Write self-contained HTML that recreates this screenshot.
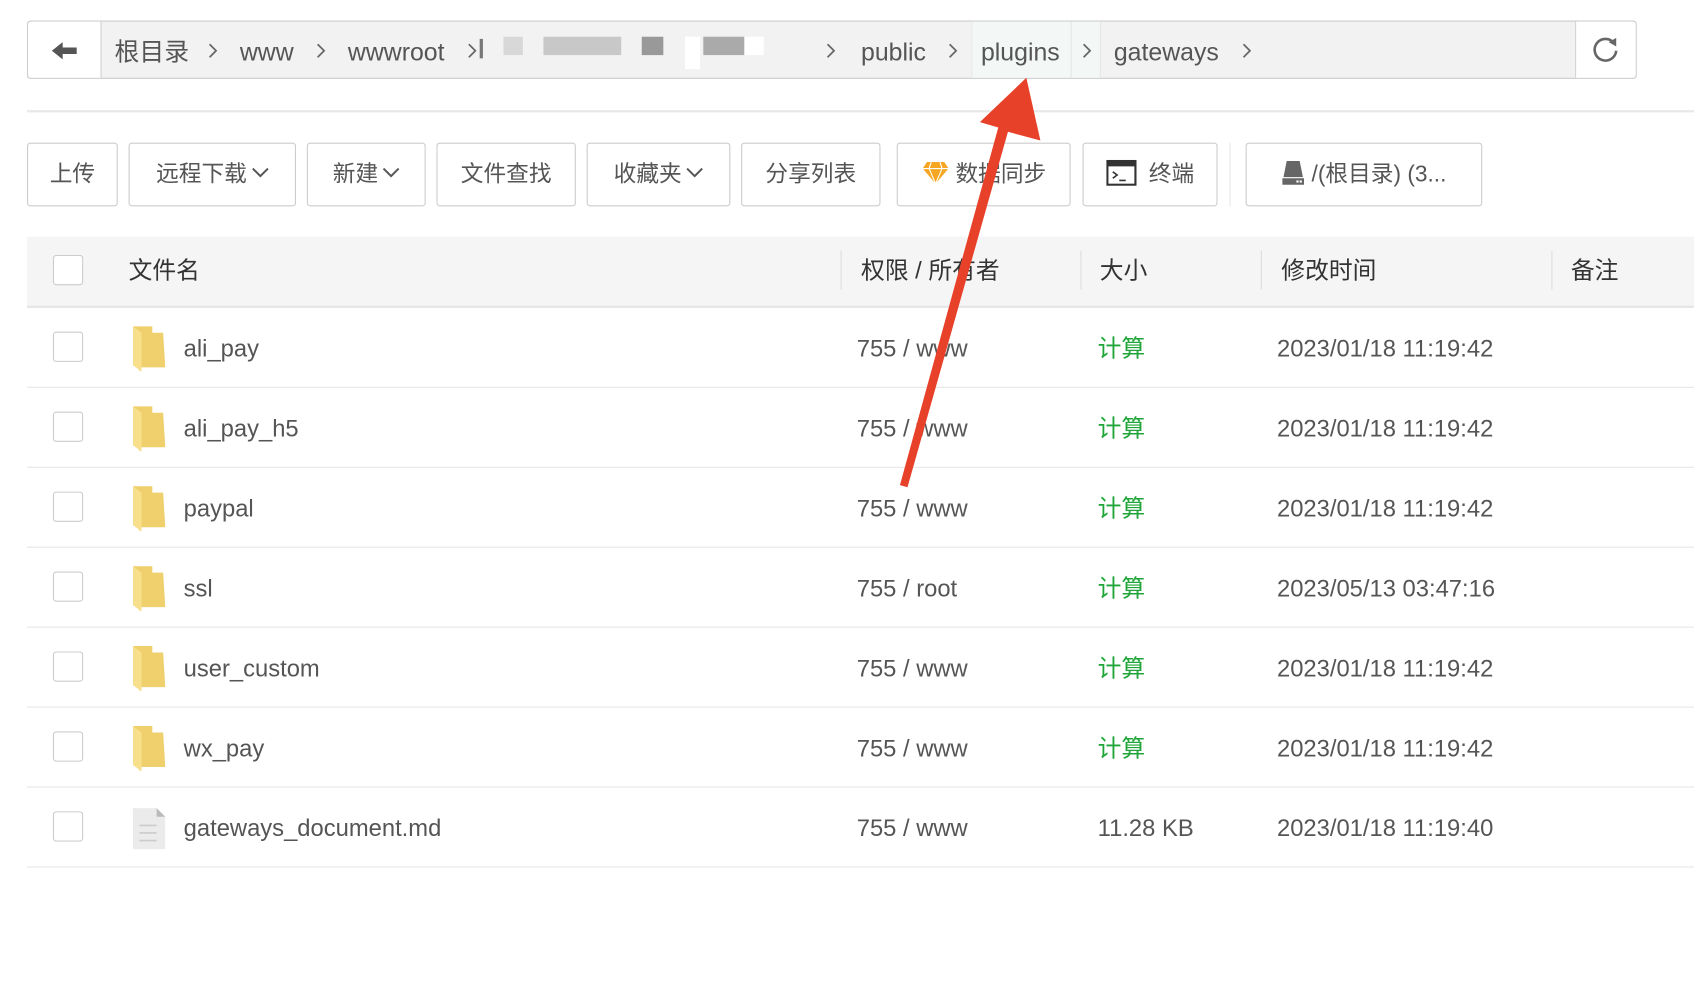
<!DOCTYPE html>
<html><head><meta charset="utf-8"><style>
html,body{margin:0;padding:0;background:#fff;width:1694px;height:982px;overflow:hidden}
#w{position:absolute;left:0;top:0;width:1568px;height:909px;transform:scale(1.08036);transform-origin:0 0;font-family:"Liberation Sans","Noto Sans CJK SC",sans-serif;color:#555}
.a{position:absolute;white-space:nowrap}
.bc{position:absolute;left:25px;top:19px;width:1488px;height:52px;border:1px solid #ccc;border-radius:3px;background:#f2f2f2}
.t{position:absolute;top:2px;line-height:52px;font-size:23px;color:#555}
.ch{position:absolute;top:19px}
.btn{position:absolute;top:132px;height:57px;border:1px solid #ccc;border-radius:3px;background:#fff;font-size:21px;line-height:57px;text-align:center;color:#555}
.cb{position:absolute;left:49px;width:26px;height:26px;border:1px solid #ccc;border-radius:3px;background:#fff}
.row{position:absolute;left:25px;width:1543px;height:73px;border-bottom:1px solid #e6e6e6;font-size:22px;color:#555}
.row .a{top:1px;line-height:73px}
.fold{position:absolute;left:98px;top:17px;width:30px;height:42px}
.dd{vertical-align:3px;margin-left:4px}
</style></head><body><div id="w">
<div class="bc">
 <div style="position:absolute;left:0;top:0;width:67px;height:52px;background:#fff;border-right:1px solid #ccc;border-radius:3px 0 0 3px"></div>
 <svg style="position:absolute;left:22px;top:18px" width="24" height="18" viewBox="0 0 24 18"><path d="M0 9 L10 1 L10 6 L23 6 L23 12 L10 12 L10 17 Z" fill="#555"/></svg>
 <span class="t" style="left:80px">根目录</span><svg class="ch" style="left:166px" width="10" height="16"><polyline points="2,2 8,8 2,14" fill="none" stroke="#666" stroke-width="1.6"/></svg>
 <span class="t" style="left:196px">www</span><svg class="ch" style="left:266px" width="10" height="16"><polyline points="2,2 8,8 2,14" fill="none" stroke="#666" stroke-width="1.6"/></svg>
 <span class="t" style="left:296px">wwwroot</span><svg class="ch" style="left:406px" width="10" height="16"><polyline points="2,2 8,8 2,14" fill="none" stroke="#666" stroke-width="1.6"/></svg>
 <div style="position:absolute;left:418px;top:16px;width:3px;height:18px;background:#777"></div>
 <div style="position:absolute;left:440px;top:14px;width:18px;height:17px;background:#d8d8d8"></div>
 <div style="position:absolute;left:477px;top:14px;width:72px;height:17px;background:#c8c8c8"></div>
 <div style="position:absolute;left:568px;top:14px;width:20px;height:17px;background:#999"></div>
 <div style="position:absolute;left:608px;top:14px;width:14px;height:30px;background:#fff"></div>
 <div style="position:absolute;left:625px;top:14px;width:38px;height:17px;background:#aaa"></div>
 <div style="position:absolute;left:663px;top:14px;width:18px;height:17px;background:#fff"></div>
 <svg class="ch" style="left:738px" width="10" height="16"><polyline points="2,2 8,8 2,14" fill="none" stroke="#666" stroke-width="1.6"/></svg>
 <span class="t" style="left:771px">public</span><svg class="ch" style="left:851px" width="10" height="16"><polyline points="2,2 8,8 2,14" fill="none" stroke="#666" stroke-width="1.6"/></svg>
 <div style="position:absolute;left:873px;top:0;width:118px;height:52px;background:#f3f8f6;border-left:1px solid #e3e8e6"></div>
 <div style="position:absolute;left:965px;top:0;width:1px;height:52px;background:#e3e8e6"></div>
 <div style="position:absolute;left:992px;top:0;width:1px;height:52px;background:#e3e8e6"></div>
 <span class="t" style="left:882px">plugins</span><svg class="ch" style="left:975px" width="10" height="16"><polyline points="2,2 8,8 2,14" fill="none" stroke="#666" stroke-width="1.6"/></svg>
 <span class="t" style="left:1005px">gateways</span><svg class="ch" style="left:1123px" width="10" height="16"><polyline points="2,2 8,8 2,14" fill="none" stroke="#666" stroke-width="1.6"/></svg>
 <div style="position:absolute;right:0;top:0;width:55px;height:52px;background:#fff;border-left:1px solid #ccc;border-radius:0 3px 3px 0"></div>
 <svg style="position:absolute;left:1446px;top:12px" width="28" height="28" viewBox="0 0 28 28"><path d="M22 8 A10 10 0 1 0 24 15" fill="none" stroke="#666" stroke-width="2.4"/><path d="M17 7 L24 3 L24 11 Z" fill="#666"/></svg>
</div>
<div class="a" style="left:25px;top:102px;width:1543px;height:2px;background:#e8e8e8"></div>
<div class="btn" style="left:25px;width:82px">上传</div>
<div class="btn" style="left:119px;width:153px">远程下载<svg class="dd" width="16" height="10"><polyline points="1,1 8,8 15,1" fill="none" stroke="#555" stroke-width="1.8"/></svg></div>
<div class="btn" style="left:284px;width:108px">新建<svg class="dd" width="16" height="10"><polyline points="1,1 8,8 15,1" fill="none" stroke="#555" stroke-width="1.8"/></svg></div>
<div class="btn" style="left:404px;width:127px">文件查找</div>
<div class="btn" style="left:543px;width:131px">收藏夹<svg class="dd" width="16" height="10"><polyline points="1,1 8,8 15,1" fill="none" stroke="#555" stroke-width="1.8"/></svg></div>
<div class="btn" style="left:686px;width:127px">分享列表</div>
<div class="btn" style="left:830px;width:159px"><svg style="vertical-align:-3px" width="26" height="22" viewBox="0 0 26 22"><path d="M5 1 L21 1 L25 7 L13 21 L1 7 Z" fill="#f5a623"/><path d="M1 7 L25 7 M9 1 L7 7 L13 21 L19 7 L17 1" fill="none" stroke="#fff" stroke-width="1"/></svg> 数据同步</div>
<div class="btn" style="left:1002px;width:123px"><svg style="vertical-align:-4px" width="28" height="24" viewBox="0 0 28 24"><rect x="1" y="1" width="26" height="22" fill="#fff" stroke="#333" stroke-width="2"/><rect x="1" y="1" width="26" height="5" fill="#333"/><path d="M6 11 L10 14 L6 17 M12 19 L18 19" fill="none" stroke="#333" stroke-width="1.5"/></svg>&nbsp; 终端</div>
<div class="a" style="left:1138px;top:132px;width:1px;height:59px;background:#e6e6e6"></div>
<div class="btn" style="left:1153px;width:217px"><svg style="vertical-align:-4px" width="22" height="24" viewBox="0 0 22 24"><path d="M5 1 L17 1 L20 16 L2 16 Z" fill="#666"/><rect x="1" y="17" width="20" height="6" fill="#666"/><rect x="14" y="19" width="2" height="2" fill="#fff"/><rect x="17" y="19" width="2" height="2" fill="#fff"/></svg> /(根目录) (3...</div>
<div class="a" style="left:25px;top:219px;width:1543px;height:64px;background:#f5f5f5;border-bottom:2px solid #e6e6e6"></div>
<div class="cb" style="top:236px"></div>
<div class="a" style="left:119px;top:219px;line-height:64px;font-size:22px;color:#333">文件名</div>
<div class="a" style="left:778px;top:232px;width:1px;height:36px;background:#ddd"></div>
<div class="a" style="left:797px;top:219px;line-height:64px;font-size:22px;color:#333">权限 / 所有者</div>
<div class="a" style="left:1000px;top:232px;width:1px;height:36px;background:#ddd"></div>
<div class="a" style="left:1018px;top:219px;line-height:64px;font-size:22px;color:#333">大小</div>
<div class="a" style="left:1167px;top:232px;width:1px;height:36px;background:#ddd"></div>
<div class="a" style="left:1186px;top:219px;line-height:64px;font-size:22px;color:#333">修改时间</div>
<div class="a" style="left:1436px;top:232px;width:1px;height:36px;background:#ddd"></div>
<div class="a" style="left:1454px;top:219px;line-height:64px;font-size:22px;color:#333">备注</div>

<div class="row" style="top:285px"><div class="cb" style="left:24px;top:22px"></div><svg class="fold" viewBox="0 0 30 42"><path d="M0 0 L18 0 L18 6 L28 6 L30 38 L8 38 L6 42 Z" fill="#f0cf6d"/><path d="M0 0 L8 6 L8 42 L0 36 Z" fill="#f7df8c"/></svg><span class="a" style="left:145px">ali_pay</span><span class="a" style="left:768px">755 / www</span><span class="a" style="left:991px;color:#20a53a">计算</span><span class="a" style="left:1157px">2023/01/18 11:19:42</span></div>
<div class="row" style="top:359px"><div class="cb" style="left:24px;top:22px"></div><svg class="fold" viewBox="0 0 30 42"><path d="M0 0 L18 0 L18 6 L28 6 L30 38 L8 38 L6 42 Z" fill="#f0cf6d"/><path d="M0 0 L8 6 L8 42 L0 36 Z" fill="#f7df8c"/></svg><span class="a" style="left:145px">ali_pay_h5</span><span class="a" style="left:768px">755 / www</span><span class="a" style="left:991px;color:#20a53a">计算</span><span class="a" style="left:1157px">2023/01/18 11:19:42</span></div>
<div class="row" style="top:433px"><div class="cb" style="left:24px;top:22px"></div><svg class="fold" viewBox="0 0 30 42"><path d="M0 0 L18 0 L18 6 L28 6 L30 38 L8 38 L6 42 Z" fill="#f0cf6d"/><path d="M0 0 L8 6 L8 42 L0 36 Z" fill="#f7df8c"/></svg><span class="a" style="left:145px">paypal</span><span class="a" style="left:768px">755 / www</span><span class="a" style="left:991px;color:#20a53a">计算</span><span class="a" style="left:1157px">2023/01/18 11:19:42</span></div>
<div class="row" style="top:507px"><div class="cb" style="left:24px;top:22px"></div><svg class="fold" viewBox="0 0 30 42"><path d="M0 0 L18 0 L18 6 L28 6 L30 38 L8 38 L6 42 Z" fill="#f0cf6d"/><path d="M0 0 L8 6 L8 42 L0 36 Z" fill="#f7df8c"/></svg><span class="a" style="left:145px">ssl</span><span class="a" style="left:768px">755 / root</span><span class="a" style="left:991px;color:#20a53a">计算</span><span class="a" style="left:1157px">2023/05/13 03:47:16</span></div>
<div class="row" style="top:581px"><div class="cb" style="left:24px;top:22px"></div><svg class="fold" viewBox="0 0 30 42"><path d="M0 0 L18 0 L18 6 L28 6 L30 38 L8 38 L6 42 Z" fill="#f0cf6d"/><path d="M0 0 L8 6 L8 42 L0 36 Z" fill="#f7df8c"/></svg><span class="a" style="left:145px">user_custom</span><span class="a" style="left:768px">755 / www</span><span class="a" style="left:991px;color:#20a53a">计算</span><span class="a" style="left:1157px">2023/01/18 11:19:42</span></div>
<div class="row" style="top:655px"><div class="cb" style="left:24px;top:22px"></div><svg class="fold" viewBox="0 0 30 42"><path d="M0 0 L18 0 L18 6 L28 6 L30 38 L8 38 L6 42 Z" fill="#f0cf6d"/><path d="M0 0 L8 6 L8 42 L0 36 Z" fill="#f7df8c"/></svg><span class="a" style="left:145px">wx_pay</span><span class="a" style="left:768px">755 / www</span><span class="a" style="left:991px;color:#20a53a">计算</span><span class="a" style="left:1157px">2023/01/18 11:19:42</span></div>
<div class="row" style="top:729px"><div class="cb" style="left:24px;top:22px"></div><svg class="fold" viewBox="0 0 30 42"><path d="M0 2 L22 2 L30 10 L30 40 L0 40 Z" fill="#ebebeb"/><path d="M22 2 L30 10 L22 10 Z" fill="#bbb"/><path d="M6 18 H22 M6 25 H22 M6 32 H22" stroke="#ccc" stroke-width="1.5"/></svg><span class="a" style="left:145px">gateways_document.md</span><span class="a" style="left:768px">755 / www</span><span class="a" style="left:991px">11.28 KB</span><span class="a" style="left:1157px">2023/01/18 11:19:40</span></div>

<svg class="a" style="left:0;top:0" width="1568" height="909" viewBox="0 0 1568 909"><path d="M833 449 L840 451 L933 122 L963 130 L950 72 L907 113 L924 118 Z" fill="#e8412a"/></svg>
</div></body></html>
